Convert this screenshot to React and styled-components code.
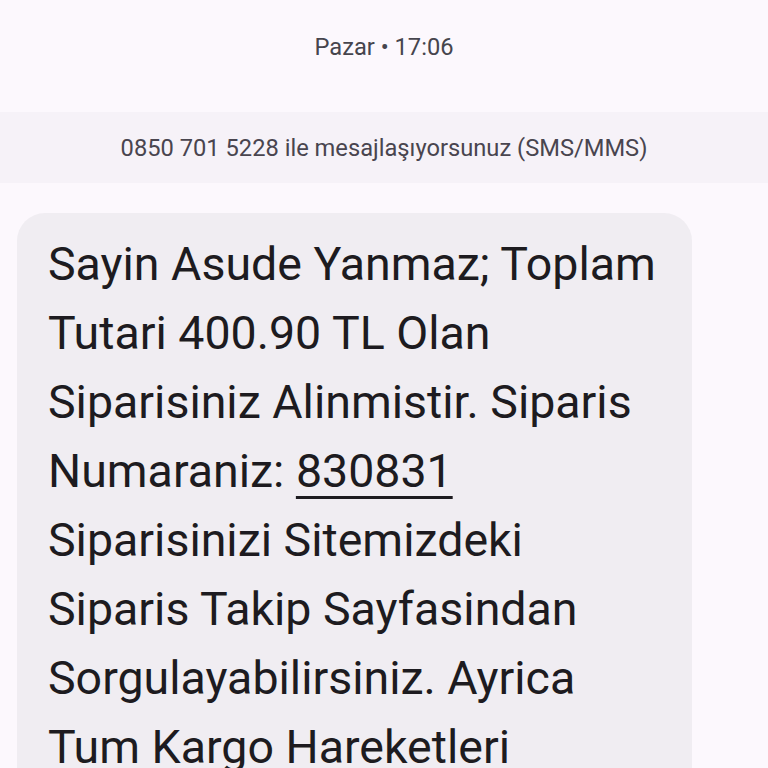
import React from 'react';
import styled, { createGlobalStyle } from 'styled-components';

const GlobalStyle = createGlobalStyle`
    html, body {
        margin: 0;
        padding: 0;
        background: #fcf8fd;
        font-family: Roboto, 'Noto Sans', sans-serif;
    }
`;

const Screen = styled.div`
    width: 768px;
    height: 768px;
    overflow: hidden;
    display: flex;
    flex-direction: column;
    background: #fcf8fd;
`;

// 날짜 표시
const DateLabel = styled.div`
    flex-shrink: 0;
    height: 112px;
    display: flex;
    align-items: center;
    justify-content: center;
    padding-bottom: 18px;
    box-sizing: border-box;
    font-size: 23.7px;
    color: #46454d;
`;

// 상대 번호 안내 띠
const InfoBand = styled.div`
    flex-shrink: 0;
    height: 71px;
    display: flex;
    align-items: center;
    justify-content: center;
    background: #f6f2f8;
    font-size: 23.7px;
    color: #49454f;
`;

const Thread = styled.div`
    flex-shrink: 0;
    padding: 30px 0 0 17px;
`;

// 수신 말풍선
const Bubble = styled.div`
    width: 675px;
    box-sizing: border-box;
    padding: 17px 20px 20px 31px;
    background: #f0edf2;
    border-radius: 28px;
    font-size: 46.5px;
    line-height: 69px;
    color: #1d1b20;
`;

const Line = styled.div`
    white-space: nowrap;
`;

const Code = styled.span`
    text-decoration: underline;
    text-decoration-thickness: 3px;
    text-underline-offset: 9px;
`;

const lines = [
    'Sayin Asude Yanmaz; Toplam',
    'Tutari 400.90 TL Olan',
    'Siparisiniz Alinmistir. Siparis',
    null,
    'Siparisinizi Sitemizdeki',
    'Siparis Takip Sayfasindan',
    'Sorgulayabilirsiniz. Ayrica',
    'Tum Kargo Hareketleri',
];

const App = () => {
    return (
        <Screen>
            <GlobalStyle />
            <DateLabel>Pazar • 17:06</DateLabel>
            <InfoBand>0850 701 5228 ile mesajlaşıyorsunuz (SMS/MMS)</InfoBand>
            <Thread>
                <Bubble>
                    {lines.map((text, i) =>
                        text === null ? (
                            <Line key={i}>Numaraniz: <Code>830831</Code></Line>
                        ) : (
                            <Line key={i}>{text}</Line>
                        )
                    )}
                </Bubble>
            </Thread>
        </Screen>
    );
};

export default App;
